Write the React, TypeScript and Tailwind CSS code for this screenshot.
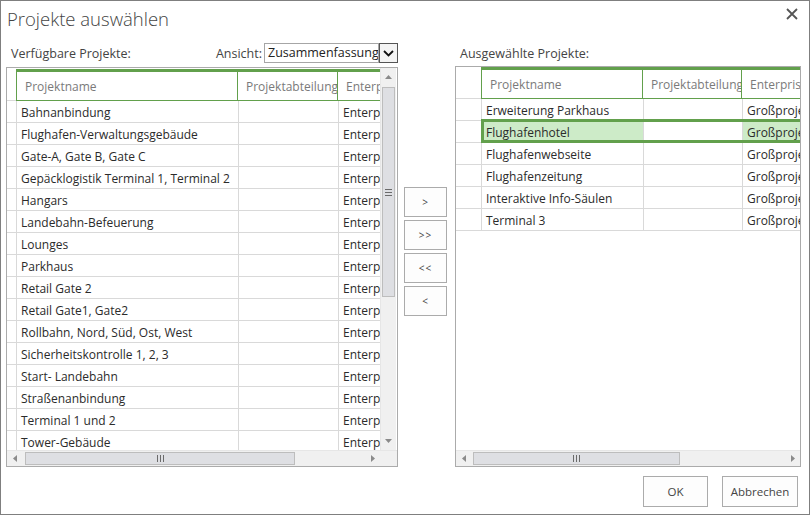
import React from 'react';

const GREEN = 'border-[#62a04c]';

const available = [
  'Bahnanbindung',
  'Flughafen-Verwaltungsgebäude',
  'Gate-A, Gate B, Gate C',
  'Gepäcklogistik Terminal 1, Terminal 2',
  'Hangars',
  'Landebahn-Befeuerung',
  'Lounges',
  'Parkhaus',
  'Retail Gate 2',
  'Retail Gate1, Gate2',
  'Rollbahn, Nord, Süd, Ost, West',
  'Sicherheitskontrolle 1, 2, 3',
  'Start- Landebahn',
  'Straßenanbindung',
  'Terminal 1 und 2',
  'Tower-Gebäude',
];

const selected = [
  'Erweiterung Parkhaus',
  'Flughafenhotel',
  'Flughafenwebseite',
  'Flughafenzeitung',
  'Interaktive Info-Säulen',
  'Terminal 3',
];

// Small triangle used by the scrollbar arrows.
function Arrow({ dir }: { dir: 'up' | 'down' | 'left' | 'right' }) {
  const pts = {
    up: '0,4 3.5,0 7,4',
    down: '0,0 3.5,4 7,0',
    left: '4,0 0,3.5 4,7',
    right: '0,0 4,3.5 0,7',
  }[dir];
  const vertical = dir === 'up' || dir === 'down';
  return (
    <svg width={vertical ? 7 : 4} height={vertical ? 4 : 7} viewBox={vertical ? '0 0 7 4' : '0 0 4 7'}>
      <polygon points={pts} fill="#8a8a8a" />
    </svg>
  );
}

function Grip({ vertical }: { vertical?: boolean }) {
  return (
    <div className={`flex ${vertical ? 'flex-col' : ''} gap-[2px]`}>
      {[0, 1, 2].map((i) => (
        <div key={i} className={vertical ? 'h-px w-[7px] bg-[#6b6b6b]' : 'h-[7px] w-px bg-[#6b6b6b]'} />
      ))}
    </div>
  );
}

function HScroll({ width, thumbLeft, thumbWidth }: { width: number; thumbLeft: number; thumbWidth: number }) {
  return (
    <div className="flex h-[15px] items-center bg-[#f0f0f0]" style={{ width }}>
      <div className="flex w-[15px] shrink-0 items-center justify-center">
        <Arrow dir="left" />
      </div>
      <div className="flex h-[15px] flex-1 items-center">
        <div
          className="flex h-[13px] items-center justify-center border border-[#bdbdbd] bg-[#dedfe3]"
          style={{ marginLeft: thumbLeft, width: thumbWidth }}
        >
          <Grip />
        </div>
      </div>
      <div className="flex w-[15px] shrink-0 items-center justify-center">
        <Arrow dir="right" />
      </div>
    </div>
  );
}

function VScroll() {
  return (
    <div className="flex h-full w-[16px] flex-col items-center border-l border-[#e6e6e6] bg-[#f0f0f0]">
      <div className="flex h-[18px] w-full items-center justify-center">
        <Arrow dir="up" />
      </div>
      <div className="mt-px flex h-[210px] w-[13px] items-center justify-center border border-[#bdbdbd] bg-[#dedfe3]">
        <Grip vertical />
      </div>
      <div className="flex-1" />
      <div className="flex h-[18px] w-full items-center justify-center">
        <Arrow dir="down" />
      </div>
    </div>
  );
}

function HeaderCell({ label, width, first }: { label: string; width: number; first?: boolean }) {
  return (
    <div
      className={`flex h-full shrink-0 items-center overflow-hidden whitespace-nowrap border-b border-r ${GREEN} ${
        first ? 'border-l' : ''
      } pl-[8px] pt-[2px] text-[#7a7a7a]`}
      style={{ width }}
    >
      {label}
    </div>
  );
}

function Cell({ text, width, bg }: { text?: string; width: number; bg?: string }) {
  return (
    <div
      className={`flex h-full shrink-0 items-center overflow-hidden whitespace-nowrap border-r border-[#d9d9d9] pl-[4px] pt-[3px] text-[#2b2b2b] ${
        bg ?? ''
      }`}
      style={{ width }}
    >
      {text}
    </div>
  );
}

export default function App() {
  return (
    <div className="flex h-[515px] w-[810px] flex-col border border-[#7f7f7f] bg-white font-['Segoe_UI','Open_Sans',sans-serif] text-[12px]">
      {/* title bar */}
      <div className="flex h-[42px] shrink-0 items-start justify-between">
        <h1 className="pl-[6px] pt-[4px] text-[18.5px] font-light leading-[28px] text-[#444]">Projekte auswählen</h1>
        <svg className="mr-[11px] mt-[7px]" width="12" height="12" viewBox="0 0 12 12">
          <path d="M1 1 L11 11 M11 1 L1 11" stroke="#555" strokeWidth="1.8" />
        </svg>
      </div>

      <div className="flex">
        {/* available projects */}
        <div className="ml-[5px] flex w-[392px] flex-col">
          <div className="flex h-[20px] items-center justify-between text-[12.5px]">
            <span className="pl-[5px] pt-[2px] text-[#444]">Verfügbare Projekte:</span>
            <div className="flex items-center">
              <span className="mr-[2px] pt-[2px] text-[#444]">Ansicht:</span>
              <div className="flex h-[20px] w-[115px] items-center overflow-hidden whitespace-nowrap border border-[#a6a6a6] pl-[3px] text-[#222]">
                Zusammenfassung
              </div>
              <div className="flex h-[20px] w-[19px] items-center justify-center border border-[#555] bg-[#f4f4f4]">
                <svg width="11" height="7" viewBox="0 0 11 7">
                  <path d="M1 1 L5.5 5.5 L10 1" stroke="#111" strokeWidth="1.8" fill="none" />
                </svg>
              </div>
            </div>
          </div>
          <div className="mt-[4px] flex h-[400px] flex-col border border-[#ababab]">
            <div className="flex min-h-0 flex-1">
              <div className="flex w-[373px] flex-col overflow-hidden pt-px">
                <div className="flex h-[32px] shrink-0">
                  <div className="h-full w-[9px] shrink-0 border-b border-[#d9d9d9]" />
                  <div className={`flex h-full border-t-[3px] ${GREEN}`}>
                    <HeaderCell label="Projektname" width={222} first />
                    <HeaderCell label="Projektabteilung" width={100} />
                    <HeaderCell label="Enterprise-Projekttyp" width={60} />
                  </div>
                </div>
                {available.map((name) => (
                  <div key={name} className="flex h-[22px] shrink-0 border-b border-[#d9d9d9]">
                    <div className="h-full w-[9px] shrink-0" />
                    <div className="flex h-full border-l border-[#d9d9d9]">
                      <Cell text={name} width={222} />
                      <Cell width={100} />
                      <Cell text="Enterprise-Projekt" width={60} />
                    </div>
                  </div>
                ))}
              </div>
              <VScroll />
            </div>
            <div className="flex border-t border-[#e6e6e6]">
              <HScroll width={373} thumbLeft={3} thumbWidth={270} />
              <div className="h-[15px] w-[17px] bg-[#f0f0f0]" />
            </div>
          </div>
        </div>

        {/* move buttons */}
        <div className="ml-[6px] mr-[8px] mt-[144px] flex w-[43px] flex-col gap-[3px]">
          {['>', '>>', '<<', '<'].map((b) => (
            <button
              key={b}
              className="flex h-[30px] w-[43px] items-center justify-center border border-[#ababab] bg-[#fdfdfd] text-[10px] tracking-[1px] text-[#444]"
            >
              {b}
            </button>
          ))}
        </div>

        {/* selected projects */}
        <div className="flex w-[346px] flex-col">
          <div className="flex h-[20px] items-center text-[12.5px]">
            <span className="pl-[5px] pt-[2px] text-[#444]">Ausgewählte Projekte:</span>
          </div>
          <div className="mt-[3px] flex h-[401px] flex-col border border-[#ababab]">
            <div className="flex min-h-0 flex-1 flex-col overflow-hidden">
              <div className="flex h-[32px] shrink-0">
                <div className="h-full w-[25px] shrink-0 border-b border-[#d9d9d9]" />
                <div className={`flex h-full border-t-[3px] ${GREEN}`}>
                  <HeaderCell label="Projektname" width={162} first />
                  <HeaderCell label="Projektabteilung" width={99} />
                  <HeaderCell label="Enterprise-Projekttyp" width={80} />
                </div>
              </div>
              {selected.map((name) => {
                const active = name === 'Flughafenhotel';
                return (
                  <div key={name} className="flex h-[22px] shrink-0 border-b border-[#d9d9d9]">
                    <div className="h-full w-[25px] shrink-0" />
                    <div className="relative flex h-full border-l border-[#d9d9d9]">
                      <Cell text={name} width={162} bg={active ? 'bg-[#cdebc8]' : ''} />
                      <Cell width={99} />
                      <Cell text="Großprojekt" width={80} bg={active ? 'bg-[#cdebc8]' : ''} />
                      {active && (
                        <div
                          className={`pointer-events-none absolute -bottom-[1px] -left-[1px] -right-[1px] -top-[2px] border-y-[3px] border-l-[3px] ${GREEN}`}
                        />
                      )}
                    </div>
                  </div>
                );
              })}
            </div>
            <div className="flex border-t border-[#e6e6e6]">
              <HScroll width={344} thumbLeft={2} thumbWidth={207} />
            </div>
          </div>
        </div>
      </div>

      {/* footer */}
      <div className="mr-[11px] mt-[9px] flex justify-end gap-[14px]">
        <button className="flex h-[31px] w-[65px] items-center justify-center border border-[#ababab] bg-[#fdfdfd] text-[11.5px] text-[#444]">
          OK
        </button>
        <button className="flex h-[31px] w-[76px] items-center justify-center border border-[#ababab] bg-[#fdfdfd] text-[11.5px] text-[#444]">
          Abbrechen
        </button>
      </div>
    </div>
  );
}
